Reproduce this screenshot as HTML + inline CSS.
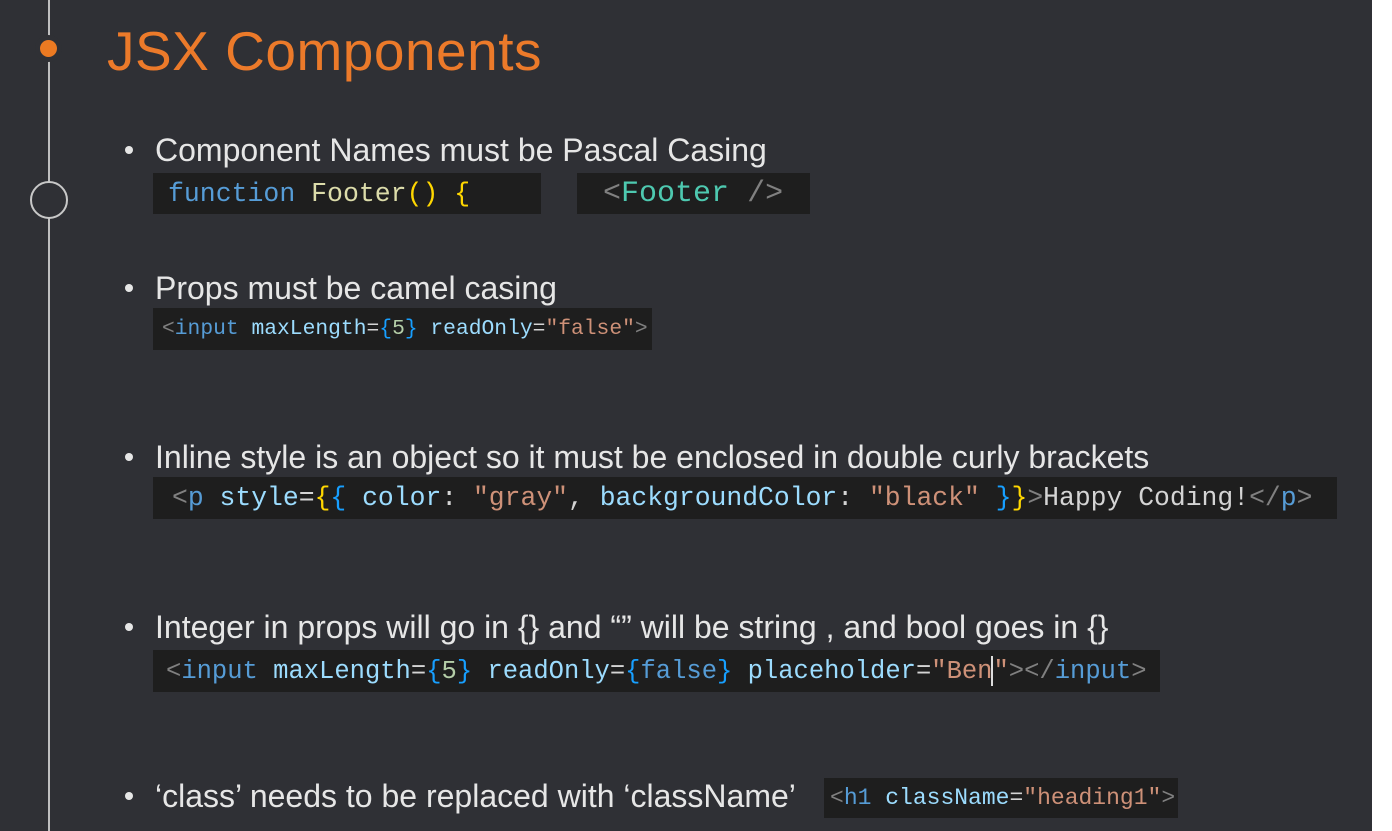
<!DOCTYPE html>
<html><head><meta charset="utf-8"><style>
html,body{margin:0;padding:0}
body{width:1392px;height:831px;background:#fff;position:relative;overflow:hidden}
#bg{position:absolute;left:0;top:0;width:1372px;height:831px;background:#2f3035}
.vl{position:absolute;left:48px;top:0;width:2px;height:831px;background:#bfbfbf}
.dot{position:absolute;left:40px;top:40px;width:17px;height:17px;border-radius:50%;background:#ec7a22;box-shadow:0 0 0 5px #2f3035}
.ring{position:absolute;left:30px;top:181px;width:34px;height:34px;border-radius:50%;border:2px solid #c8c8c8;background:#2f3035}
h1{position:absolute;left:107px;top:19px;margin:0;font:300 55px "Liberation Sans",sans-serif;color:#ec7a2a;letter-spacing:0.5px}
.b{position:absolute;left:124px;font:32px "Liberation Sans",sans-serif;color:#e6e6e6;white-space:nowrap;line-height:34px}
.b:before{content:"";position:absolute;left:1px;top:13px;width:8px;height:8px;border-radius:50%;background:#e6e6e6}
.b span{margin-left:31px}
.c{position:absolute;background:#1e1e1e;font-family:"Liberation Mono",monospace;white-space:nowrap;box-sizing:border-box;display:flex;align-items:center}
.g{color:#808080}.t{color:#569cd6}.a{color:#9cdcfe}.s{color:#ce9178}.n{color:#b5cea8}.y{color:#ffd700}.bl{color:#179fff}.f{color:#dcdcaa}.k{color:#4ec9b0}.w{color:#d4d4d4}
</style></head><body>
<div id="bg"></div>
<div class="vl"></div>
<div class="dot"></div>
<div class="ring"></div>
<h1>JSX Components</h1>

<div class="b" style="top:133px"><span>Component Names must be Pascal Casing</span></div>
<div class="c" style="left:153px;top:173px;width:388px;height:41px;padding-left:15px;font-size:26.5px"><span class="t">function</span>&nbsp;<span class="f">Footer</span><span class="y">()</span>&nbsp;<span class="y">{</span></div>
<div class="c" style="left:577px;top:173px;width:233px;height:41px;padding-left:26px;font-size:30px"><span class="g">&lt;</span><span class="k">Footer</span>&nbsp;<span class="g">/&gt;</span></div>

<div class="b" style="top:271px"><span>Props must be camel casing</span></div>
<div class="c" style="left:153px;top:308px;width:499px;height:42px;padding-left:9px;font-size:21.3px"><span class="g">&lt;</span><span class="t">input</span>&nbsp;<span class="a">maxLength</span><span class="w">=</span><span class="bl">{</span><span class="n">5</span><span class="bl">}</span>&nbsp;<span class="a">readOnly</span><span class="w">=</span><span class="s">"false"</span><span class="g">&gt;</span></div>

<div class="b" style="top:440px"><span>Inline style is an object so it must be enclosed in double curly brackets</span></div>
<div class="c" style="left:153px;top:477px;width:1184px;height:42px;padding-left:19px;font-size:26.4px"><span class="g">&lt;</span><span class="t">p</span>&nbsp;<span class="a">style</span><span class="w">=</span><span class="y">{</span><span class="bl">{</span>&nbsp;<span class="a">color</span><span class="w">:</span>&nbsp;<span class="s">"gray"</span><span class="w">,</span>&nbsp;<span class="a">backgroundColor</span><span class="w">:</span>&nbsp;<span class="s">"black"</span>&nbsp;<span class="bl">}</span><span class="y">}</span><span class="g">&gt;</span><span class="w">Happy Coding!</span><span class="g">&lt;/</span><span class="t">p</span><span class="g">&gt;</span></div>

<div class="b" style="top:610px"><span>Integer in props will go in {} and “” will be string , and bool goes in {}</span></div>
<div class="c" style="left:153px;top:650px;width:1007px;height:42px;padding-left:13px;font-size:25.5px"><span class="g">&lt;</span><span class="t">input</span>&nbsp;<span class="a">maxLength</span><span class="w">=</span><span class="bl">{</span><span class="n">5</span><span class="bl">}</span>&nbsp;<span class="a">readOnly</span><span class="w">=</span><span class="bl">{</span><span class="t">false</span><span class="bl">}</span>&nbsp;<span class="a">placeholder</span><span class="w">=</span><span class="s">"Ben</span><span style="border-left:2px solid #ddd;height:30px;margin-left:-1px"></span><span class="s">"</span><span class="g">&gt;&lt;/</span><span class="t">input</span><span class="g">&gt;</span></div>

<div class="b" style="top:779px"><span>‘class’ needs to be replaced with ‘className’</span></div>
<div class="c" style="left:824px;top:778px;width:354px;height:40px;padding-left:6px;font-size:23px"><span class="g">&lt;</span><span class="t">h1</span>&nbsp;<span class="a">className</span><span class="w">=</span><span class="s">"heading1"</span><span class="g">&gt;</span></div>
</body></html>
